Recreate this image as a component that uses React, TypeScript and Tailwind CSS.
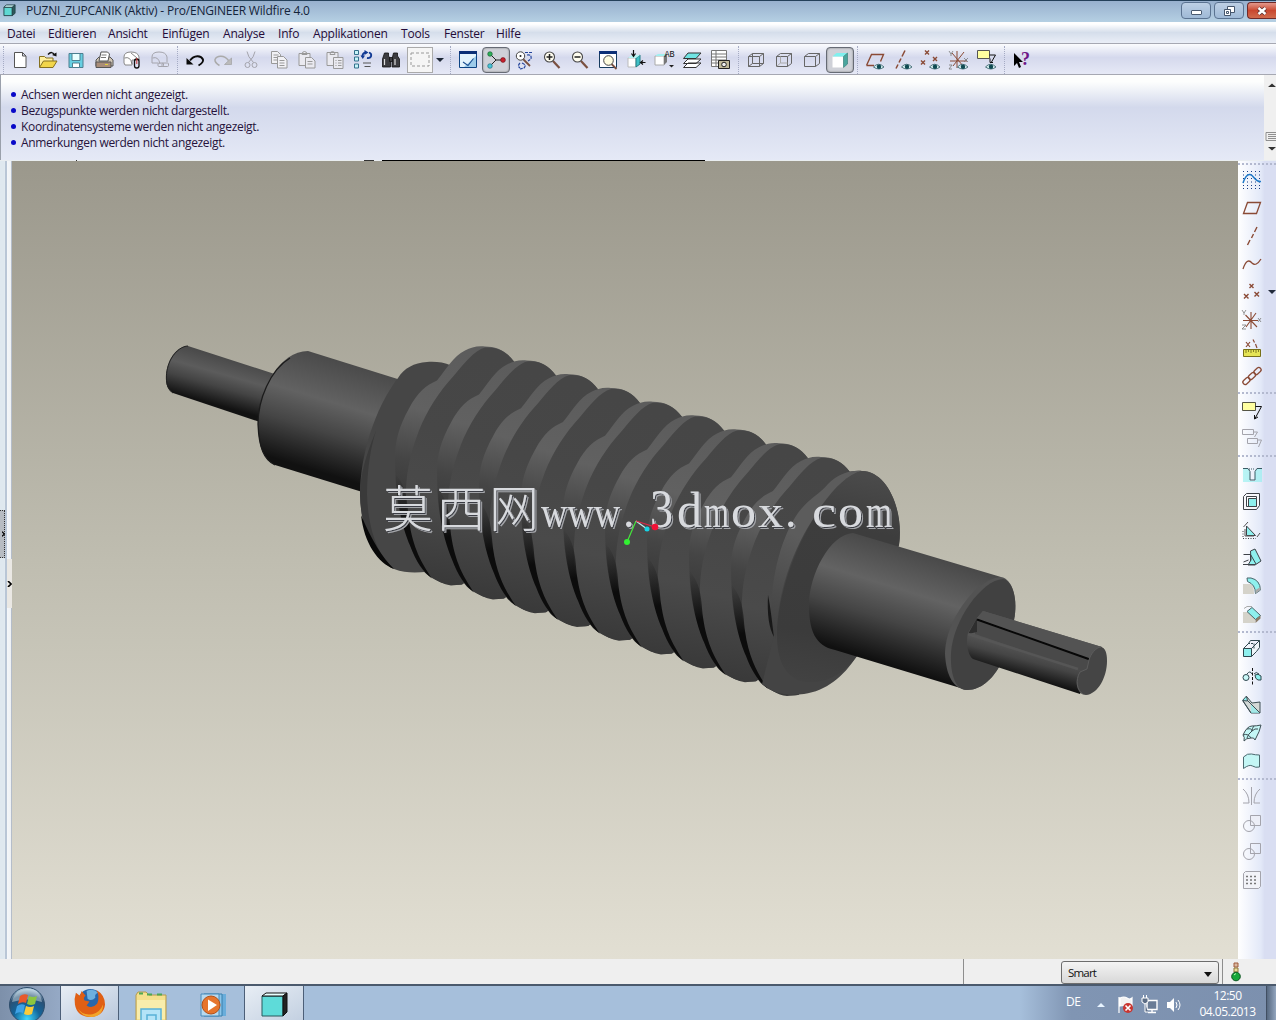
import type { ReactNode } from 'react'
import { clsx } from 'clsx'

const menuItems = [
  { label: 'Datei', width: 'w-[41px]' },
  { label: 'Editieren', width: 'w-[60px]' },
  { label: 'Ansicht', width: 'w-[54px]' },
  { label: 'Einfügen', width: 'w-[61px]' },
  { label: 'Analyse', width: 'w-[55px]' },
  { label: 'Info', width: 'w-[35px]' },
  { label: 'Applikationen', width: 'w-[88px]' },
  { label: 'Tools', width: 'w-[43px]' },
  { label: 'Fenster', width: 'w-[52px]' },
  { label: 'Hilfe', width: 'w-[40px]' },
]

const messages = [
  'Achsen werden nicht angezeigt.',
  'Bezugspunkte werden nicht dargestellt.',
  'Koordinatensysteme werden nicht angezeigt.',
  'Anmerkungen werden nicht angezeigt.',
]

const BROWN = '#8a4a35'
const GREY = '#a4a4ac'
const CYAN = '#8ef0ee'

const eye = (
  <g>
    <path d="M8.500 17q5-5.500 10.500 0q-5 4-10.500 0z" fill="#d9f3f3" stroke="#2b5560" strokeWidth=".8" />
    <circle cx="14" cy="16.800" r="2.200" fill="#0f4a52" />
  </g>
)

const wireCube = <path d="M2.500 6.500h11v10h-11zM6.500 3.500h11v10h-11zM2.500 6.500l4-3M13.500 6.500l4-3M13.500 16.500l4-3M2.500 16.500l4-3" />

const magnifier = (
  <g>
    <path d="M11 11l6.500 7" stroke="#7a5040" strokeWidth="2.200" />
    <circle cx="7.500" cy="7" r="5" fill="#fffdf0" stroke="#444" strokeWidth="1.100" />
  </g>
)

const icons: Record<string, ReactNode> = {
  new: <path d="M4.500 2.500h8l3.500 3.500v11.500H4.500zM12.500 2.500V6H16" fill="#fff" stroke="#555" />,
  open: (
    <g>
      <path d="M1.500 17V6.500h5l1.500 1.500h7v3" fill="#fff0a0" stroke="#857020" />
      <path d="M1.500 17.500l4-6.500h13.500l-4 6.500z" fill="#f2d64b" stroke="#857020" />
      <path d="M10 4.500q4-4 6.500.5" stroke="#111" strokeWidth="1.500" />
      <path d="M14 5l4.500 1.500V2.500z" fill="#111" />
    </g>
  ),
  save: (
    <g stroke="#4c7f90">
      <path d="M3 3.500h14v14H3z" fill="#67cfe2" />
      <path d="M6 3.500h8v7H6z" fill="#eaffff" />
      <path d="M6.500 13h7v4.500h-7z" fill="#fff" />
    </g>
  ),
  print: (
    <g stroke="#555">
      <path d="M2 10l3-3h11l3 3v6H2z" fill="#cfc5b5" />
      <path d="M7 2h6.500l2 2-1.500 7H5z" fill="#fff" />
      <path d="M7.500 5h5M7 7.500h5" strokeWidth=".8" />
      <path d="M2 12h15v5.500H2z" fill="#a98d78" />
      <path d="M11 14.500h3" stroke="#e2d33c" />
    </g>
  ),
  mailAttach: (
    <g stroke="#666">
      <path d="M2 13V7q0-5 7-5 7 0 8 5v3H10v5H3z" fill="#fff" stroke="#888" />
      <path d="M2.500 8q6-2 7.500 6M9 3l6 5" strokeWidth=".8" />
      <rect x="12.500" y="9" width="4.500" height="9" rx="2.200" fill="none" stroke="#111" strokeWidth="1.300" />
      <path d="M14.800 8v6" stroke="#c33" />
    </g>
  ),
  mailLink: (
    <g stroke={GREY}>
      <path d="M2 13V7q0-5 7-5 7 0 8 5v5M2.500 8q6-2 7.500 6M2 13h6" />
      <rect x="8" y="13" width="5.500" height="3.500" rx="1" />
      <rect x="12" y="13" width="6.500" height="3.500" rx="1" />
    </g>
  ),
  undo: (
    <g>
      <path d="M5 10.500C9 5 16 5 18 9.500q.7 3-4.500 6" stroke="#0b0b0b" strokeWidth="1.900" />
      <path d="M1.500 8v6.500h7z" fill="#0b0b0b" />
    </g>
  ),
  redo: (
    <g>
      <path d="M15.500 10.500C11.500 5 4 5 2 9.500q-.5 3 4.500 6" stroke="#aaa" strokeWidth="1.500" />
      <path d="M18.500 8v6.500h-7z" fill="#bbb" stroke="#999" strokeWidth=".6" />
    </g>
  ),
  cut: (
    <g stroke={GREY}>
      <path d="M6 1.500q.5 5 6.500 11M14 1.500q-.5 5-6.500 11" />
      <circle cx="6.500" cy="15" r="2.500" />
      <circle cx="13.500" cy="15" r="2.500" />
    </g>
  ),
  copy: (
    <g stroke="#999" fill="#f1f1f5">
      <path d="M2.500 1.500h6l3 3v9h-9zM4.500 5h5M4.500 7.500h5M4.500 10h5" />
      <path d="M8.500 6.500h6l3.500 3.500v8H8.500zM10.500 10.500h5M10.500 13h5M10.500 15.500h5" />
    </g>
  ),
  paste: (
    <g stroke="#999" fill="#eaeaf0">
      <path d="M2 3.500h11v12H2zM5 4.500q0-3 2.500-3T10 4.500z" />
      <path d="M8.500 7.500h6l3.500 3.500v7H8.500zM10.500 11.500h5M10.500 14h5" />
    </g>
  ),
  pasteSpecial: (
    <g stroke="#999" fill="#eaeaf0">
      <path d="M2 2.500h11v13H2zM5 4.500q0-3 2.500-3T10 4.500z" />
      <path d="M8.500 7.500h9.500v11H8.500zM10.500 10.500h1M13 10.500h3.500M10.500 13h1M13 13h3.500M10.500 15.500h1M13 15.500h3.500" />
    </g>
  ),
  regenerate: (
    <g>
      <path d="M1.500 .5h4v4h-4zM1.500 7h4v4h-4zM1.500 14h4v4h-4z" fill="#c7f4f8" stroke="#33708c" />
      <path d="M9.500 7q-.5-4 3.500-4.500M16 2.500q3 1 2 4q-1 2-4 1.500" stroke="#123a94" strokeWidth="1.800" />
      <path d="M11.500 0v5l4-2.500zM7.500 5.500h4.500L9.800 9z" fill="#123a94" />
      <path d="M10 13h8M11.500 16.500h6" stroke="#555" />
    </g>
  ),
  find: (
    <g fill="#3c3c40" stroke="#111" strokeWidth=".8">
      <path d="M3.500 3h4v3l2 3v8H1.500V9zM12.500 3h4v3l2 3v8h-7.500V9z" />
      <path d="M8.500 7.500h3v4h-3z" />
      <path d="M3.500 9v6M14 9v6" stroke="#ddd" strokeWidth="1.200" />
    </g>
  ),
  select: <path d="M1 3h18v13H1z" fill="none" stroke="#999" strokeDasharray="3 2" />,
  repaint: (
    <g>
      <path d="M1.500 1.500h17v16h-17z" fill="#e4f3fc" stroke="#0d4484" />
      <path d="M1 1h18v3H1z" fill="#0c2f76" />
      <path d="M6 17l12-11v11z" fill="#9ccbea" />
      <path d="M5 12l5 3.500 5.500-7" stroke="#1c4f91" strokeWidth="1.100" />
    </g>
  ),
  spin: (
    <g>
      <path d="M10 10L4 4M10 10l-6 6M10 10h7" stroke="#222" />
      <circle cx="4" cy="4" r="2.300" fill="#2faf58" stroke="#0d552a" strokeWidth=".6" />
      <circle cx="4" cy="16" r="2.300" fill="#49c4d6" stroke="#136273" strokeWidth=".6" />
      <circle cx="17" cy="10" r="2.400" fill="#c8202c" stroke="#670d14" strokeWidth=".6" />
    </g>
  ),
  orient: (
    <g>
      <path d="M9 9l7 7" stroke="#7a5040" strokeWidth="1.800" />
      <circle cx="6.500" cy="6" r="4.200" fill="#fff" stroke="#444" />
      <circle cx="6.500" cy="6" r="1" fill="#222" />
      <path d="M11 2.500h7M13 5q5-1 4 4l-3 2M6 13q-3 3 0 5M8 13q5 2 2 5l-4 1" stroke="#24449c" strokeWidth="1.200" strokeDasharray="3 1" />
    </g>
  ),
  zoomIn: <g>{magnifier}<path d="M4.500 7h6M7.500 4v6" stroke="#222" strokeWidth="1.500" /></g>,
  zoomOut: <g>{magnifier}<path d="M4.500 7h6" stroke="#222" strokeWidth="1.500" /></g>,
  refit: (
    <g>
      <path d="M1.500 1.500h17v16h-17z" fill="#fff" stroke="#163b5e" />
      <path d="M1 1h18v3H1z" fill="#0c2f76" />
      <path d="M13.500 14l5 5" stroke="#7a5040" strokeWidth="1.800" />
      <circle cx="10.500" cy="10.500" r="4.800" fill="#fffde0" stroke="#444" />
    </g>
  ),
  reorient: (
    <g>
      <path d="M2 8h8v9H2z" fill="#fff" stroke="#bbb" />
      <path d="M10 8l4-3v9l-4 3z" fill="#3fc0c6" stroke="#237d84" />
      <path d="M2 8l4-3h8l-4 3z" fill="#b8f5f5" />
      <path d="M7.500 0v6M5.500 3.500l2 3 2-3M19.500 12.500h-5M17 10.500l-2.500 2 2.500 2" stroke="#111" strokeWidth="1.200" />
    </g>
  ),
  savedViews: (
    <g>
      <path d="M1 6h9v9H1z" fill="#fff" stroke="#aaa" />
      <path d="M1 6l3-2h9l-3 2z" fill="#a0eff1" />
      <path d="M10 6l3-2v8l-3 3z" fill="#777" />
      <text x="10.500" y="6.500" fontSize="8.500" fill="#111" stroke="none" className="font-['Liberation_Mono']">AB</text>
      <path d="M15 15h5l-2.500 2.500z" fill="#222" />
    </g>
  ),
  layers: (
    <g stroke="#333">
      <path d="M1.500 17.500l4.500-4.500H19l-5 4.500zM1.500 13.500L6 9H19l-5 4.500z" fill="#fff" />
      <path d="M1.500 8.500L6 3H19l-5 5.500z" fill="#6fe3e3" />
    </g>
  ),
  viewManager: (
    <g>
      <path d="M1.500.5h15v16h-15zM1.500 4h15M1.500 7h15M1.500 10h15M1.500 13h15M6 .5v16" fill="#fff" stroke="#777" />
      <path d="M8.500 10.500h11v8h-11z" fill="#bfb99b" stroke="#222" />
      <circle cx="14" cy="14.500" r="2.300" fill="#eee" stroke="#222" />
    </g>
  ),
  wireframe: <g stroke="#666">{wireCube}</g>,
  hiddenLine: (
    <g stroke="#666">
      <path d="M2.500 6.500h11v10h-11zM2.500 6.500l4-3h11v10l-4 3M13.500 6.500l4-3" />
      <path d="M6.500 6.500v6.500h7M2.500 16.500l4-3.500" stroke="#aaa" />
    </g>
  ),
  noHidden: <path d="M2.500 6.500h11v10h-11zM2.500 6.500l4-3h11v10l-4 3M13.500 6.500l4-3" stroke="#666" />,
  shading: (
    <g>
      <path d="M2.500 6.500h11v11h-11z" fill="#fff" />
      <path d="M2.500 6.500l4-3.500h11l-4 3.500z" fill="#7ff0ee" />
      <path d="M13.500 6.500l4-3.500v11l-4 3.500z" fill="#4aa69e" stroke="#317a74" strokeWidth=".6" />
    </g>
  ),
  showPlanes: <g><path d="M1.500 15.500l5-11h12l-3 7M1.500 15.500H9" stroke={BROWN} strokeWidth="1.400" />{eye}</g>,
  showAxes: <g><path d="M12 .5l-3 6M8 8.500l-2 4M5 14.500l-2 4" stroke={BROWN} strokeWidth="1.500" />{eye}</g>,
  showPoints: <g><path d="M4 .5l4 4M8 .5l-4 4M0 10.500l4 4M4 10.500l-4 4M12 7l4 4M16 7l-4 4" stroke={BROWN} strokeWidth="1.400" />{eye}</g>,
  showCsys: (
    <g>
      <path d="M1 11h17M8 1v17M3 3l12 14M15 2L4 16" stroke={BROWN} />
      <path d="M0 1l2 3 2-3M2 4v2M15 8l4 4M19 8l-4 4M0 15h3l-3 4h3" stroke="#777" strokeWidth=".8" />
      {eye}
    </g>
  ),
  showNotes: (
    <g>
      <path d="M.5 .5h12v8H.5z" fill="#ffffa0" stroke="#555" />
      <path d="M12.500 5h6l-4 7M13 8.500v4h3" stroke="#111" />
      {eye}
    </g>
  ),
  help: (
    <g>
      <path d="M2 3v13l3-3 2 5 2-1-2-5h4z" fill="#000" />
      <text x="9" y="15" fontSize="18" fontWeight="bold" fill="#6e1687" stroke="none" className="font-['Liberation_Serif']">?</text>
    </g>
  ),
  sketch: (
    <g>
      <path d="M1 1.500h18M1 5h18M1 8.500h18M1 12h18M1 15.500h18M1 18.500h18" stroke="#1a3d86" strokeDasharray="1 3" />
      <path d="M1 13q3-9 7-8.500c4 .5 5 8 11 7" stroke="#1e78c8" strokeWidth="1.500" />
    </g>
  ),
  plane: <path d="M1.500 15.500l4-11h13l-4 11z" stroke={BROWN} strokeWidth="1.300" />,
  axis: <path d="M15 1l-2.500 5M11.500 8L9.500 12M8 14l-2.500 5" stroke={BROWN} strokeWidth="1.400" />,
  curve: <path d="M1 15Q5 3 10 9q4 4 9-4" stroke={BROWN} strokeWidth="1.300" />,
  points: <path d="M7.500 2l4 4M11.500 2l-4 4M2 12l4.500 4.500M6.500 12L2 16.500M12.500 10l4.500 4.500M17 10l-4.500 4.500" stroke={BROWN} strokeWidth="1.400" />,
  csys: (
    <g>
      <path d="M1 10.500h15M9 2v17M3.500 5L15 17M14 3L4 17" stroke={BROWN} strokeWidth="1.100" />
      <path d="M0 0l2 3 2-3M2 3v2M16 8l3 4M19 8l-3 4M0 15h4l-4 4h4" stroke="#777" strokeWidth=".8" />
    </g>
  ),
  analysisFeature: (
    <g>
      <path d="M4 4l4 5M8 4l-4 5M11 1.500l1.500 3M13.500 6l1.500 4" stroke={BROWN} strokeWidth="1.200" />
      <path d="M1.500 11.500h17v7h-17z" fill="#e5e455" stroke="#777018" />
      <path d="M4 12v3M6.500 12v2M9 12v3M11.500 12v2M14 12v3M16.500 12v2" stroke="#6b6418" strokeWidth=".8" />
    </g>
  ),
  reference: (
    <g stroke={BROWN} strokeWidth="1.300">
      <rect x="-4" y="-2.300" width="8" height="4.600" rx="2.200" transform="translate(4.500 15) rotate(-42)" />
      <rect x="-4" y="-2.300" width="8" height="4.600" rx="2.200" transform="translate(10 10) rotate(-42)" />
      <rect x="-4" y="-2.300" width="8" height="4.600" rx="2.200" transform="translate(15.500 5) rotate(-42)" />
    </g>
  ),
  note: (
    <g>
      <path d="M.5 2.500h13v8H.5z" fill="#ffffa0" stroke="#554" />
      <path d="M13.500 6.500h6l-6.500 12M12.500 15v4l3.500-2" stroke="#111" />
    </g>
  ),
  noteGroup: <path d="M.5 1.500h11v5H.5zM11.500 4h4l-3 5M5.500 10.500h10v5h-10zM15.500 12h4l-3 7" stroke={GREY} />,
  hole: (
    <g>
      <path d="M1 5h5l2 3v9h5V8l2-3h5v13H1z" fill={CYAN} opacity=".6" />
      <path d="M1 4.500h5l2 3v8.500h5V7.500l2-3h5" stroke="#3a5b64" />
      <path d="M7 5h6" stroke="#3a5b64" strokeDasharray="1 1" />
    </g>
  ),
  shell: (
    <g stroke="#3e4248">
      <path d="M1.500 4.500l3-3h13v12l-3 4h-13z" fill="#f7f7fb" />
      <path d="M4.500 4.500h10v10h-10z" fill="#fff" />
      <path d="M6.500 6.500h8v8h-8z" fill={CYAN} />
    </g>
  ),
  rib: (
    <g stroke="#3e4248">
      <path d="M4.500 6l9 9.500h-9z" fill={CYAN} />
      <path d="M1.500 7L6 2M3 9v7h9M15 17l3-4" stroke="#555" />
      <path d="M1 18.500h13M1 11v7" strokeDasharray="1 1.500" />
    </g>
  ),
  draft: (
    <g stroke="#3e4248">
      <path d="M8.500 3L13 1l6 12-6 4H6l3-5z" fill={CYAN} />
      <path d="M1.500 6.500h7V13M1 16.500h12M8.500 6.500L14 16M1.500 14l5-2" />
    </g>
  ),
  round: (
    <g>
      <path d="M1 8h7q4 1 4 10H1z" fill="#d5d3ca" />
      <path d="M5 2h4q9 2 9.500 12l-5 3.500q0-9-8-12z" fill={CYAN} stroke="#49666b" />
      <path d="M13.500 17.500l5-3.500v-3l-5 3z" fill="#aaa" />
    </g>
  ),
  chamfer: (
    <g>
      <path d="M1 8h5l7 6v5H1z" fill="#d5d3ca" />
      <path d="M5 7.500l5-4 8.500 8-5 4z" fill={CYAN} stroke="#49666b" />
      <path d="M13.500 15.500l5-4v3l-5 4.500z" fill="#8a7c68" />
      <path d="M2 4.500l3-2h5" stroke="#aaa" />
    </g>
  ),
  extrude: (
    <g stroke="#2f474e">
      <path d="M9.500 9.500l8-8v7l-3 4-5 5z" fill="#eef5fa" />
      <path d="M1.500 9.500h8v8h-8z" fill={CYAN} />
      <path d="M1.500 9.500l5-5 2-3h9" />
      <path d="M6 4.500h6v6" strokeDasharray="2 1" />
    </g>
  ),
  revolve: (
    <g stroke="#2f474e">
      <circle cx="4" cy="10.500" r="3" fill="#c9f7f8" />
      <path d="M13 8q3-2 6 1v4h-3q-3-1-3-5z" fill={CYAN} />
      <path d="M10.500 1v18" stroke="#111" strokeDasharray="3 1.500" />
      <path d="M5 7q3-4 5 0M12 7q2-3 5 0" />
    </g>
  ),
  sweep: (
    <g stroke="#3e4f54">
      <path d="M1 6l4-4 5 6 8-1v11H9z" fill="#d3d8d6" />
      <path d="M9 9l9 9H9z" fill={CYAN} fillOpacity=".7" stroke="none" />
      <path d="M.5 5.500L4.500 1l1 5z" fill={CYAN} />
      <path d="M1 6l8 12M5 5l13 13" />
    </g>
  ),
  blend: (
    <g stroke="#3e4f54">
      <path d="M1 12Q5 3 10 3q5 0 9-1-1 6-6 15-1-3-4-2-5 0-7 3 1-4-1-6z" fill="#c4f6f5" />
      <path d="M5 6q5-1 5 2 3-3 6-2M10 8q-4 3-5 7M12 3q-2 2-2 5M1 12q5-2 8 3" />
    </g>
  ),
  surface: <path d="M1.500 17.500V6q4-4 8-3t8 1v12q-4 1-7-1t-9 2.500z" fill="#c4f6f5" stroke="#4d6a70" />,
  mirror: <path d="M9.500 1v18M1 3q6 5 6 14H1M18 3q-6 5-6 14h6" stroke={GREY} />,
  merge: <g stroke={GREY}><path d="M8.500 1.500h10v10h-10z" fill="#eceef6" /><circle cx="7" cy="12" r="5.500" /></g>,
  trim: <g stroke={GREY}><path d="M8.500 1.500h10v10h-10z" /><circle cx="7" cy="12" r="5.500" /><path d="M8.500 6.500v5h4" /></g>,
  pattern: (
    <g stroke={GREY}>
      <path d="M1.500 3.500l2-2h15v15l-2 2h-15z" fill="#f2f3f8" />
      <path d="M4 6.500h12M4 10h12M4 13.500h12" stroke="#777" strokeWidth="1.500" strokeDasharray="2 2" />
    </g>
  ),
}

const Icon = ({ name }: { name: string }) => (
  <svg viewBox="0 0 20 20" className="size-5 shrink-0 overflow-visible" fill="none">{icons[name]}</svg>
)

const toolGroups = [
  { grip: 'mr-0.5 ml-[3px]', items: ['new', 'open', 'save', 'print', 'mailAttach', 'mailLink'] },
  { grip: 'mx-[3px]', items: ['undo', 'redo', 'cut', 'copy', 'paste', 'pasteSpecial', 'regenerate', 'find'] },
  { grip: 'mr-[3px] ml-1', items: ['repaint', 'spin', 'orient', 'zoomIn', 'zoomOut', 'refit', 'reorient', 'savedViews', 'layers', 'viewManager'] },
  { grip: 'mr-[3px] ml-1', items: ['wireframe', 'hiddenLine', 'noHidden', 'shading'] },
  { grip: 'mx-[3px]', items: ['showPlanes', 'showAxes', 'showPoints', 'showCsys', 'showNotes'] },
  { grip: 'mx-[3px]', items: ['help'] },
]

const featureGroups = [
  { gap: 'h-[5px]', items: ['sketch', 'plane', 'axis', 'curve', 'points', 'csys', 'analysisFeature', 'reference'] },
  { gap: 'h-1.5', items: ['note', 'noteGroup'] },
  { gap: 'h-2', items: ['hole', 'shell', 'rib', 'draft', 'round', 'chamfer'] },
  { gap: 'h-[7px]', items: ['extrude', 'revolve', 'sweep', 'blend', 'surface'] },
  { gap: 'h-[7px]', items: ['mirror', 'merge', 'trim', 'pattern'] },
]

function ToolButton({ name }: { name: string }) {
  const pressed = name === 'spin' || name === 'shading'
  return (
    <div className={clsx('flex h-[26px] w-7 items-center justify-center rounded', pressed && 'border border-[#666b75] bg-[#cfd1d8] shadow-[inset_0_0_2px_#777]')}>
      <Icon name={name} />
    </div>
  )
}

function TitleBar() {
  return (
    <header className="flex h-[22px] items-start border-t border-[#24405a] bg-linear-to-b from-[#98b0ce] to-[#b5d0e3]">
      <svg viewBox="0 0 14 14" className="mt-[3px] ml-[3px] size-[13px]">
        <path d="M1 3.500h9v9H1z" fill="#5ed8d2" stroke="#26454c" />
        <path d="M1 3.500L3.500 1H13l-3 2.500z" fill="#d4fbfa" stroke="#26454c" />
        <path d="M10 3.500L13 1v9l-3 2.500z" fill="#2d5a5c" stroke="#26454c" />
      </svg>
      <h1 className="ml-[10px] flex-1 text-[12px] leading-[19px] tracking-[-0.19px] text-[#14243a]">PUZNI_ZUPCANIK (Aktiv) - Pro/ENGINEER Wildfire 4.0</h1>
      <div className="mt-px flex gap-[3px]">
        <div className="flex h-[17px] w-[30px] items-center justify-center rounded-sm border border-[#5b7391] bg-linear-to-b from-[#bdd0e5] to-[#9fb9d6]">
          <div className="mt-1 h-[5px] w-[11px] rounded-[1px] border border-[#4a5a70] bg-white" />
        </div>
        <div className="flex h-[17px] w-[30px] items-center justify-center rounded-sm border border-[#5b7391] bg-linear-to-b from-[#bdd0e5] to-[#9fb9d6]">
          <svg viewBox="0 0 12 12" className="size-3" fill="#fff" stroke="#46566c"><path d="M4.500 1.500h7v6h-7z" /><path d="M1.500 4.500h6v6h-6z" /><path d="M3.500 6.500h2v2h-2z" /></svg>
        </div>
        <div className="flex h-[17px] w-[29px] items-center justify-center rounded-l-sm border border-r-0 border-[#702a28] bg-linear-to-b from-[#e2978b] via-[#c9472f] to-[#d06a4c]">
          <svg viewBox="0 0 12 10" className="h-2.5 w-3"><path d="M2.500 2l7 6M9.500 2l-7 6" stroke="#5a3030" strokeWidth="4" /><path d="M2.500 2l7 6M9.500 2l-7 6" stroke="#fff" strokeWidth="2.400" /></svg>
        </div>
      </div>
    </header>
  )
}

// One turn of the worm; repeated along the axis with a fixed pitch.
function ThreadTurn() {
  return (
    <g>
      <path d="M611 388C603 387 597 389 591 392C579 398 573 410 563 422C552 427 544 433 535 450C525 468 521 482 521 500C521 535 528 565 535 583C541 601 547 611 553 616C565 625 574 627 588 626L612 610L606 480L646 413L640 403C632 392 622 388 611 388Z" fill="url(#band)" />
      <path d="M611 389C600 392 590 405 580 417C565 433 553 452 545 472C537 493 533 510 532 530C531 556 536 579 543 597C550 614 562 625 577 627L588 626L620 600L612 470L646 413L640 403C632 392 622 388 611 389Z" fill="url(#flank)" />
      <path d="M521 515C523 550 530 573 536 587C542 603 549 613 558 620C548 605 539 590 535 562C533 545 534 530 521 515Z" fill="url(#undercut)" />
    </g>
  )
}

function WormShaft() {
  return (
    <svg viewBox="12 161 1226 798" className="block h-full w-full">
      <defs>
        <linearGradient id="pin" gradientUnits="userSpaceOnUse" x1="232" y1="358" x2="218" y2="408">
          <stop offset="0" stopColor="#484848" /><stop offset=".35" stopColor="#5c5c5c" /><stop offset=".6" stopColor="#444" /><stop offset=".95" stopColor="#121212" />
        </linearGradient>
        <linearGradient id="journal" gradientUnits="userSpaceOnUse" x1="352" y1="364" x2="317" y2="480">
          <stop offset="0" stopColor="#4a4a4a" /><stop offset=".35" stopColor="#626262" /><stop offset=".6" stopColor="#454545" /><stop offset=".93" stopColor="#111" />
        </linearGradient>
        <linearGradient id="journalRight" gradientUnits="userSpaceOnUse" x1="930" y1="554" x2="894" y2="670">
          <stop offset="0" stopColor="#484848" /><stop offset=".35" stopColor="#636363" /><stop offset=".62" stopColor="#454545" /><stop offset=".97" stopColor="#101010" />
        </linearGradient>
        <linearGradient id="pinRight" gradientUnits="userSpaceOnUse" x1="1034" y1="648" x2="1026" y2="678">
          <stop offset="0" stopColor="#595959" /><stop offset=".45" stopColor="#454545" /><stop offset="1" stopColor="#121212" />
        </linearGradient>
        <linearGradient id="band" gradientUnits="userSpaceOnUse" x1="600" y1="395" x2="550" y2="625">
          <stop offset="0" stopColor="#5c5c5c" /><stop offset=".28" stopColor="#616161" /><stop offset=".5" stopColor="#454545" /><stop offset=".72" stopColor="#363636" /><stop offset="1" stopColor="#3a3a3a" />
        </linearGradient>
        <linearGradient id="flank" gradientUnits="userSpaceOnUse" x1="600" y1="395" x2="560" y2="625">
          <stop offset="0" stopColor="#464646" /><stop offset=".35" stopColor="#474747" /><stop offset=".65" stopColor="#4a4a4a" /><stop offset="1" stopColor="#393939" />
        </linearGradient>
        <linearGradient id="undercut" gradientUnits="userSpaceOnUse" x1="520" y1="515" x2="530" y2="565">
          <stop offset="0" stopColor="#222" stopOpacity="0" /><stop offset="1" stopColor="#0c0c0c" />
        </linearGradient>
        <linearGradient id="endBand" gradientUnits="userSpaceOnUse" x1="850" y1="475" x2="775" y2="630">
          <stop offset="0" stopColor="#5c5c5c" /><stop offset=".45" stopColor="#5c5c5c" /><stop offset="1" stopColor="#424242" />
        </linearGradient>
        <linearGradient id="endFace" gradientUnits="userSpaceOnUse" x1="860" y1="475" x2="820" y2="690">
          <stop offset="0" stopColor="#4a4a4a" /><stop offset=".25" stopColor="#3d3d3d" /><stop offset=".75" stopColor="#3b3b3b" /><stop offset="1" stopColor="#434343" />
        </linearGradient>
        <filter id="relief" x="-5%" y="-10%" width="110%" height="130%">
          <feDropShadow dx="1" dy="1" stdDeviation="0" floodColor="#3a3d44" />
          <feDropShadow dx="1" dy="1" stdDeviation="0.200" floodColor="#a4a6aa" />
        </filter>
      </defs>

      <path d="M188 346L290 379L275 427L173 393C167 389 166 384 166 378C166 363 174 347 188 346Z" fill="url(#pin)" />
      <path d="M173 393C164 388 165 370 171 359C176 350 183 346 188 346" fill="none" stroke="#222" />
      <path d="M308 351L420 386L385 499L275 465C262 459 258 443 258 422C258 390 280 351 308 351Z" fill="url(#journal)" />
      <path d="M290 358C270 370 258 400 258 424C259 448 264 460 275 465" fill="none" stroke="#1b1b1b" strokeWidth="1.300" />

      <path d="M427 362C414 363 404 368 398 378C375 408 360 455 360 495C361 532 376 561 394 569C410 575 425 572 440 570L470 380C456 364 442 361 427 362Z" fill="#464646" />
      <path d="M376 431C366 455 360 475 360 495C361 532 374 558 394 569C376 555 368 525 367 495C367 470 371 445 376 431Z" fill="#3a3a3a" />
      <path d="M361 515C364 543 378 563 394 569C382 557 372 541 361 515Z" fill="#080808" />

      {Array.from({ length: 9 }, (_, i) => (
        <g key={i} transform={`translate(${(i - 3) * 42} ${(i - 3) * 13.8})`}><ThreadTurn /></g>
      ))}

      <path d="M862 471C850 470 838 474 828 484C818 496 796 510 784 540C774 565 772 600 774 635L762 684C775 695 790 696 804 694C826 691 843 677 857 656L899 545C904 510 887 471 862 471Z" fill="#444" />
      <path d="M862 471C850 470 838 474 828 484C820 494 808 499 798 513C782 536 770 575 771 625L776 640C777 583 800 533 825 503C838 486 849 474 862 471Z" fill="url(#endBand)" />
      <path d="M862 471C848 474 835 487 822 505C800 538 780 583 777 628C776 658 783 674 800 681C824 686 843 675 857 656L899 545C904 510 887 471 862 471Z" fill="url(#endFace)" />
      <path d="M768 595C767 615 769 628 774 637C772 622 771 610 768 595Z" fill="#181818" />

      <path d="M853 533L1001 577L967 690L835 650C815 646 809 630 809 605C809 575 830 534 853 533Z" fill="url(#journalRight)" />
      <path d="M1001 577C977 578 945 620 945 654C946 675 953 689 967 690C981 690 992 679 999 667L1014 620C1018 600 1013 579 1001 577Z" fill="#535353" />
      <path d="M1003 579C982 580 953 620 951 653C950 678 957 690 967 690C981 690 992 679 999 667L1014 620C1018 600 1013 581 1003 579Z" fill="#414141" />
      <path d="M983 611L1102 647L1080 694L973 659C967 655 966 640 968 633L977 618Z" fill="url(#pinRight)" />
      <path d="M983 611L1102 647L1090 659L977 618Z" fill="#535353" />
      <path d="M977 619L1090 659L1087 671L1080 670L975 634Z" fill="#494949" />
      <path d="M977 618L977 632L968 634Z" fill="#2e2e2e" />
      <path d="M977 619.500L1090 659.500" stroke="#070707" strokeWidth="2" />
      <path d="M968 634L1078 669" stroke="#565656" strokeWidth="2.500" />
      <path d="M1101 647C1096 647 1090 655 1089 660L1087 669L1080 672C1073 682 1078 695 1086 695C1098 694 1107 677 1107 661C1107 652 1105 648 1101 647Z" fill="#454545" />
      <path d="M1101 647C1096 647 1090 655 1089 660L1087 669L1080 672C1075 680 1077 691 1083 694" fill="none" stroke="#5c5c5c" />

      <g fill="#d8dade" filter="url(#relief)" className="font-['Liberation_Serif','Noto_Sans_CJK_SC',serif]">
        <text x="383" y="527" fontSize="50" textLength="156" className="font-['Noto_Sans_CJK_SC',sans-serif]" fontWeight="300">莫西网</text>
        <text x="541" y="527" fontSize="45" textLength="79" lengthAdjust="spacingAndGlyphs">www</text>
        <text x="623" y="527" fontSize="46">.</text>
        <text x="650" y="527" fontSize="54" textLength="23" lengthAdjust="spacingAndGlyphs">3</text>
        <text x="677" y="527" fontSize="50" textLength="25" lengthAdjust="spacingAndGlyphs">d</text>
        <text x="704" y="527" fontSize="46" textLength="25" lengthAdjust="spacingAndGlyphs">m</text>
        <text x="731" y="527" fontSize="46" textLength="25" lengthAdjust="spacingAndGlyphs">o</text>
        <text x="758" y="527" fontSize="46" textLength="25" lengthAdjust="spacingAndGlyphs">x</text>
        <text x="785" y="527" fontSize="46">.</text>
        <text x="812" y="527" fontSize="46" textLength="24" lengthAdjust="spacingAndGlyphs">c</text>
        <text x="838" y="527" fontSize="46" textLength="25" lengthAdjust="spacingAndGlyphs">o</text>
        <text x="866" y="527" fontSize="46" textLength="26" lengthAdjust="spacingAndGlyphs">m</text>
      </g>

      <g fill="none" strokeWidth="1.200">
        <path d="M627 542L636 521" stroke="#45e63c" />
        <path d="M636 521L647 529" stroke="#b8eef2" />
        <path d="M636 521L655 527" stroke="#e02848" />
      </g>
      <circle cx="627" cy="542" r="3" fill="#32f032" />
      <circle cx="647" cy="529" r="2.500" fill="#16d4e6" />
      <circle cx="655" cy="527" r="3.300" fill="#f01236" />
    </svg>
  )
}

function FeatureBar() {
  return (
    <aside className="flex w-[38px] shrink-0 flex-col bg-linear-to-r from-white via-[#e3e9f8] via-60% to-[#d9def2] to-70%">
      {featureGroups.map(({ gap, items }) => (
        <div key={items[0]}>
          <div className={clsx('flex items-center', gap)}><div className="h-px w-full border-t-2 border-dotted border-[#b3b9cf]" /></div>
          {items.map((name) => (
            <div key={name} className="flex h-7 items-center pl-1">
              <Icon name={name} />
              {name === 'points' && <svg viewBox="0 0 8 4" className="ml-[6px] h-1 w-2"><path d="M0 0h8L4 4z" fill="#222b3c" /></svg>}
            </div>
          ))}
        </div>
      ))}
    </aside>
  )
}

function LeftRail() {
  return (
    <div className="relative w-3 shrink-0 border-r border-[#b4bdca] bg-linear-to-r from-[#dfe8ef] from-40% via-[#f7f9fb] to-[#eef1f5]">
      <div className="ml-[5px] h-full w-0.5 bg-[#b9c6d6]" />
      <div className="absolute top-[349px] left-0 h-12 w-[5px] border-y border-r border-dotted border-[#333] bg-[#b7bcc2]" />
      <svg viewBox="0 0 5 6" className="absolute top-[370px] left-0.5 h-1.5 w-1"><path d="M0 0l3 3-3 3" stroke="#000" strokeWidth="1.500" fill="none" /></svg>
      <div className="absolute top-[398px] left-[7px] flex h-[49px] w-[5px] items-center bg-[#eae8e4]">
        <svg viewBox="0 0 5 6" className="h-1.5 w-[5px]"><path d="M1 0l3 3-3 3" stroke="#000" strokeWidth="1.600" fill="none" /></svg>
      </div>
    </div>
  )
}

function StatusBar() {
  return (
    <div className="flex h-[25px] items-center justify-end bg-[#efefef]">
      <div className="h-full w-[98px] border-l border-[#8e8e8e]" />
      <div className="mt-0.5 flex h-[23px] w-[158px] items-center justify-between rounded-[3px] border border-[#6d6d6d] bg-linear-to-b from-[#f4f4f4] to-[#d8d8d8] pr-[6px] pl-1.5">
        <span className="text-[11.5px] tracking-[-0.8px] text-[#111]">Smart</span>
        <svg viewBox="0 0 8 5" className="mt-1 h-[5px] w-2"><path d="M0 0h8L4 5z" fill="#111" /></svg>
      </div>
      <div className="ml-[3px] h-full w-px bg-[#8e8e8e]" />
      <svg viewBox="0 0 12 20" className="mr-[34px] ml-[7px] h-5 w-3">
        <path d="M4 1h4v4H4z" fill="#d9b8a0" stroke="#a05a3c" />
        <path d="M4 6h4v4H4z" fill="#eadd9c" stroke="#8f793c" />
        <circle cx="6" cy="14.500" r="4.300" fill="#16a83a" stroke="#0b541f" />
        <path d="M4 13l2-1.500" stroke="#b5ffb5" />
      </svg>
    </div>
  )
}

function StartOrb() {
  return (
    <svg viewBox="0 0 36 36" className="mt-px ml-[9px] size-9 overflow-visible">
      <defs>
        <radialGradient id="orb" cx=".5" cy=".9" r=".85">
          <stop offset="0" stopColor="#3fd8ff" /><stop offset=".45" stopColor="#13659b" /><stop offset=".8" stopColor="#2c4f72" /><stop offset="1" stopColor="#a9c4d8" />
        </radialGradient>
      </defs>
      <circle cx="18" cy="18" r="17.500" fill="url(#orb)" stroke="#2d4d6c" />
      <path d="M3 15Q5 3 18 2t15 13q-14-5-30 0z" fill="#dceaf2" opacity=".45" />
      <path d="M11 9q4-3 8-1l-2 8q-4-2-8 1z" fill="#e8592b" />
      <path d="M20 9q4 2 8 0l-2 8q-4 2-8 0z" fill="#8cc63f" />
      <path d="M8 19q4-3 8-1l-2 8q-4-2-8 1z" fill="#3fa2e6" />
      <path d="M17 19q4 2 8 0l-2 8q-4 2-8 0z" fill="#fbcb3a" />
    </svg>
  )
}

function Taskbar() {
  return (
    <footer className="flex h-9 overflow-hidden border-t-2 border-[#4b5a6d] bg-[#a6bfdb]">
      <div className="w-[60px] bg-linear-to-r from-[#7d90aa] to-[#95a9c5]"><StartOrb /></div>
      <div className="flex w-[59px] justify-center border-x border-[#4c5f78] bg-linear-to-br from-[#e8eef5] to-[#b9c8dc]">
        <svg viewBox="0 0 34 34" className="mt-px size-[33px]">
          <circle cx="18" cy="15" r="13" fill="#2767ac" />
          <path d="M14 4q7-3 12 2-4 1-3 5-4 4-8 1z" fill="#6db0df" />
          <path d="M3 6l4 3 2-5 4 5q-3 2-1 5l5 1-3 4q6 4 11-2 3-8-1-14 9 5 9 15-1 11-14 13Q4 31 2 18q-1-6 1-12z" fill="#e05f14" />
          <path d="M5 22q5 8 15 6 8-2 11-10 0 12-12 13Q9 31 5 22z" fill="#f2a52a" />
        </svg>
      </div>
      <div className="flex w-[63px] justify-center">
        <svg viewBox="0 0 34 34" className="mt-1 size-[34px]">
          <path d="M2 5l2-3h8l3 3h17v26H2z" fill="#f4e08d" stroke="#b69a4c" />
          <path d="M5 3.500h4M13 4.500h5M23 4.500h5" stroke="#4da852" strokeWidth="2" />
          <path d="M3 10h28v19H3z" fill="#f9edac" />
          <path d="M7 33V19h20v14M13 33v-8h9v8" fill="#b4e4f7" stroke="#58b1d8" strokeWidth="1.500" />
        </svg>
      </div>
      <div className="flex w-[62px] justify-center pl-px">
        <svg viewBox="0 0 30 30" className="mt-1.5 size-[30px]">
          <path d="M9 2h18v22H9z" fill="#69addb" /><path d="M5 2h18v22H5z" fill="#8cc5e9" stroke="#387eac" /><path d="M2 2h18v22H2z" fill="#b7d9ef" stroke="#478abb" />
          <circle cx="12" cy="13" r="9" fill="#e6752d" stroke="#b2501a" />
          <path d="M9 7.500l9 5.500-9 6z" fill="#fff" />
        </svg>
      </div>
      <div className="flex w-[60px] justify-center border-x border-[#4c5f78] bg-linear-to-br from-[#e8eef5] to-[#c3d0e1]">
        <svg viewBox="0 0 28 26" className="mt-[6px] ml-0.5 h-[26px] w-7">
          <path d="M1 4h21v20H1z" fill="#5edbd9" stroke="#28585c" /><path d="M1 4l4-3h21l-4 3z" fill="#e8ffff" stroke="#111" /><path d="M22 4l4-3v19l-4 4z" fill="#222" stroke="#111" />
        </svg>
      </div>
      <div className="flex-1" />
      <div className="flex w-[256px] bg-linear-to-r from-[#a6bfdb] via-[#8095b3] via-20% to-[#7c90ae] text-white">
        <span className="mt-[7px] ml-[46px] w-[31px] text-[12px] leading-[18px] tracking-[-0.5px]">DE</span>
        <svg viewBox="0 0 8 4" className="mt-[17px] h-1 w-2"><path d="M0 4l4-4 4 4z" fill="#e8f4ff" /></svg>
        <svg viewBox="0 0 66 20" className="mt-[9px] ml-3 h-5 w-[66px]" fill="none">
          <path d="M2 2v16M3 3q4-2 7 0t5 0v8q-3 1-5 0t-7 0z" fill="#f2f2f2" stroke="#fff" strokeWidth="1.200" />
          <circle cx="11" cy="13" r="5" fill="#c93530" />
          <path d="M8.500 10.500l5 5M13.500 10.500l-5 5" stroke="#fff" strokeWidth="1.600" />
          <path d="M30 5.500h10v9H30zM31 17.500h8M35 14.500v3" fill="#6a7c96" stroke="#fff" strokeWidth="1.400" />
          <path d="M25 3h6v4l-3 2-3-2zM26.500 0v3M29.500 0v3M28 9v8h3" fill="#5d6e86" stroke="#fff" />
          <path d="M50 7h3l4-4v14l-4-4h-3z" fill="#fff" />
          <path d="M59 7q2 3 0 6M61 5q4 5 0 10" stroke="#fff" />
        </svg>
        <div className="mt-0.5 ml-[13px] flex w-[63px] flex-col items-center text-[12px] leading-[16px] tracking-[-0.5px]">
          <span>12:50</span>
          <span>04.05.2013</span>
        </div>
        <div className="ml-auto w-2.5 border-l border-[#414f63] bg-linear-to-r from-[#566880] to-[#94a6bf]" />
      </div>
    </footer>
  )
}

export default function App() {
  return (
    <div className="flex h-[1020px] w-[1276px] flex-col overflow-hidden bg-[#efefef] font-['Open_Sans','Noto_Sans_CJK_SC',sans-serif]">
      <TitleBar />
      <nav className="flex h-[21px] items-center bg-linear-to-b from-white from-10% via-[#d5deeb] via-50% to-[#eaeef7] pt-0.5 pl-[7px] text-[12px] tracking-[-0.2px] text-[#240b38]">
        {menuItems.map(({ label, width }) => <span key={label} className={clsx('whitespace-nowrap', width)}>{label}</span>)}
      </nav>

      <div className="flex h-8 items-center border-t border-b border-[#a6a8b2] bg-linear-to-b from-[#fbfcfe] via-[#d5d9ed] via-45% to-[#e6e9f6] pt-0.5">
        {toolGroups.map(({ grip, items }, i) => (
          <div key={items[0]} className="flex items-center">
            <div className={clsx('h-7 w-px border-l border-dotted border-[#a5abc4]', grip)} />
            {items.map((name) => <ToolButton key={name} name={name} />)}
            {i === 1 && (
              <>
                <div className="ml-0.5 flex size-[26px] items-center justify-center border border-[#aaa] bg-[#f5f5f5]"><Icon name="select" /></div>
                <svg viewBox="0 0 8 4" className="mr-0.5 ml-[3px] h-1 w-2"><path d="M0 0h8L4 4z" fill="#1c2635" /></svg>
              </>
            )}
          </div>
        ))}
      </div>

      <section className="flex h-[85px]">
        <ul className="flex-1 border-l border-[#9aa0ab] bg-linear-to-b from-[#fdfefd] from-8% via-[#d3d9ec] via-38% to-[#e5e9f6] pt-3 pl-2.5 text-[12px] leading-4 tracking-[-0.33px] text-[#26133c]">
          {messages.map((text) => (
            <li key={text} className="flex items-center gap-[5px]">
              <span className="mb-0.5 size-[5px] rounded-full bg-[#0909c8]" />
              {text}
            </li>
          ))}
        </ul>
        <svg viewBox="0 0 12 85" className="w-3 bg-[#f0f0f0]" fill="#333">
          <path d="M4 12h8L8 8.500zM4 72h8l-4 3.500z" />
          <path d="M2 57.500h10M2 65.500h10M2 57.500v8M4 59.500h8M4 61.500h8M4 63.500h8" stroke="#777" strokeWidth=".8" />
        </svg>
      </section>

      <div className="flex h-px bg-[#e9edf0]">
        <div className="ml-[76px] h-full w-px bg-[#333]" />
        <div className="ml-[287px] h-full w-2.5 bg-[#333]" />
        <div className="ml-2 h-full w-[323px] bg-black" />
      </div>

      <main className="flex h-[798px]">
        <LeftRail />
        <div className="min-w-0 flex-1 bg-linear-to-b from-[#9b988c] via-[#bfbdb0] via-50% to-[#e2dfd3]"><WormShaft /></div>
        <FeatureBar />
      </main>
      <StatusBar />
      <Taskbar />
    </div>
  )
}
